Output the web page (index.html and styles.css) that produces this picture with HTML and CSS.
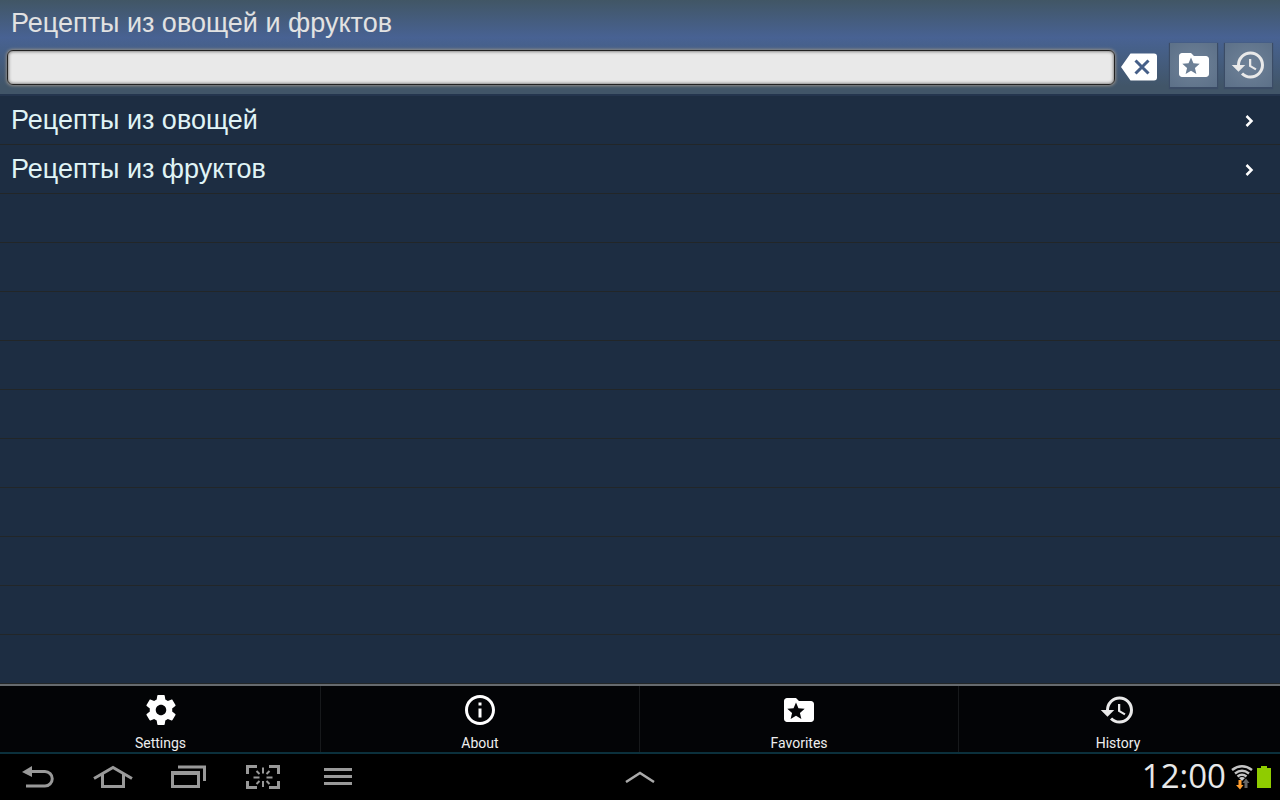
FILE: index.html
```html
<!DOCTYPE html>
<html lang="ru">
<head>
    <meta charset="UTF-8">
    <meta name="viewport" content="width=device-width, initial-scale=1.0">
    <title>Рецепты из овощей и фруктов</title>
    <link rel="stylesheet" href="styles.css">
</head>
<body>
    <!-- Shared icons -->
    <svg class="sprite" aria-hidden="true">
        <symbol id="icon-folder" viewBox="0 0 24 24">
            <path d="M20 6h-8l-2-2H4c-1.1 0-2 .9-2 2v12c0 1.1.9 2 2 2h16c1.1 0 2-.9 2-2V8c0-1.1-.9-2-2-2zm-6.42 12L10 15.9 6.42 18l.95-4.07-3.16-2.74 4.16-.36L10 7l1.63 3.84 4.16.36-3.16 2.74.95 4.06z"/>
        </symbol>
        <symbol id="icon-history" viewBox="0 0 24 24">
            <path d="M13 3a9 9 0 0 0-9 9H.5L5 16.500 9.500 12H6c0-3.87 3.13-7 7-7s7 3.13 7 7-3.13 7-7 7c-1.93 0-3.68-.79-4.94-2.06l-1.42 1.42A8.95 8.95 0 0 0 13 21a9 9 0 0 0 0-18zm-1 5v5l4.28 2.54.72-1.21-3.5-2.08V8H12z"/>
        </symbol>
        <symbol id="icon-chevron" viewBox="0 0 12 14">
            <path d="M3.500 2l5 5-5 5" fill="none" stroke="currentColor" stroke-width="2.500"/>
        </symbol>
    </svg>

    <header class="header">
        <h1 class="title">Рецепты из овощей и фруктов</h1>
        <form class="search">
            <input class="search-input" type="text" aria-label="Поиск">
            <button class="clear-btn" type="reset" aria-label="Очистить">
                <svg width="36" height="28" viewBox="0 0 36 28">
                    <path d="M9.500 0.500H33a3 3 0 0 1 3 3v21a3 3 0 0 1-3 3H9.500L0 14z" fill="#fff"/>
                    <path d="M14.500 7.500l13 13M27.500 7.500l-13 13" stroke="#455f88" stroke-width="3"/>
                </svg>
            </button>
            <button class="tool-btn" type="button" aria-label="Favorites">
                <svg class="icon"><use href="#icon-folder"/></svg>
            </button>
            <button class="tool-btn tool-btn-soft" type="button" aria-label="History">
                <svg class="icon"><use href="#icon-history"/></svg>
            </button>
        </form>
    </header>

    <main class="content">
        <ul class="list">
            <li>
                <a class="row" href="#vegetables">Рецепты из овощей
                    <svg class="chevron"><use href="#icon-chevron"/></svg>
                </a>
            </li>
            <li>
                <a class="row" href="#fruits">Рецепты из фруктов
                    <svg class="chevron"><use href="#icon-chevron"/></svg>
                </a>
            </li>
        </ul>
    </main>

    <nav class="menu">
        <button class="menu-item" type="button">
            <svg class="icon" viewBox="0 0 24 24">
                <path d="M19.430 12.980c.04-.32.07-.64.07-.98s-.03-.66-.07-.98l2.110-1.650c.19-.15.24-.42.12-.64l-2-3.460c-.12-.22-.39-.3-.61-.22l-2.490 1c-.52-.4-1.080-.73-1.690-.98l-.38-2.650A.488.488 0 0 0 14 2h-4c-.25 0-.46.18-.49.42l-.38 2.650c-.61.25-1.170.59-1.690.98l-2.490-1c-.23-.09-.49 0-.61.22l-2 3.460c-.13.22-.07.49.12.64l2.110 1.650c-.04.32-.07.65-.07.98s.03.66.07.98l-2.110 1.650c-.19.15-.24.42-.12.64l2 3.460c.12.22.39.3.61.22l2.490-1c.52.4 1.080.73 1.690.98l.38 2.650c.03.24.24.42.49.42h4c.25 0 .46-.18.49-.42l.38-2.650c.61-.25 1.170-.59 1.690-.98l2.490 1c.23.09.49 0 .61-.22l2-3.460c.12-.22.07-.49-.12-.64l-2.110-1.650zM12 15.500c-1.930 0-3.500-1.570-3.500-3.500s1.570-3.500 3.500-3.500 3.500 1.570 3.500 3.500-1.570 3.500-3.500 3.500z"/>
            </svg>
            <span>Settings</span>
        </button>
        <button class="menu-item" type="button">
            <svg class="icon" viewBox="0 0 24 24">
                <path d="M11 17h2v-6h-2v6zm1-15C6.480 2 2 6.480 2 12s4.480 10 10 10 10-4.480 10-10S17.520 2 12 2zm0 18c-4.410 0-8-3.590-8-8s3.590-8 8-8 8 3.590 8 8-3.590 8-8 8zM11 9h2V7h-2v2z"/>
            </svg>
            <span>About</span>
        </button>
        <button class="menu-item" type="button">
            <svg class="icon"><use href="#icon-folder"/></svg>
            <span>Favorites</span>
        </button>
        <button class="menu-item menu-item-soft" type="button">
            <svg class="icon"><use href="#icon-history"/></svg>
            <span>History</span>
        </button>
    </nav>

    <footer class="system-bar">
        <div class="system-keys">
            <button class="key" type="button" aria-label="Back">
                <svg width="32" height="22" viewBox="0 0 32 22">
                    <path d="M0 6L10 0v11z" fill="#999"/>
                    <path d="M9 5.500h14a7 7 0 0 1 0 14.500H4" fill="none" stroke="#999" stroke-width="3"/>
                </svg>
            </button>
            <button class="key" type="button" aria-label="Home">
                <svg width="40" height="24" viewBox="0 0 40 24" fill="none" stroke="#999" stroke-width="3">
                    <path d="M1 13.500L20 2.500l19 11"/>
                    <path d="M9.500 9v12.500h21V9"/>
                </svg>
            </button>
            <button class="key" type="button" aria-label="Recent apps">
                <svg width="36" height="24" viewBox="0 0 36 24" fill="none" stroke="#999" stroke-width="3">
                    <path d="M8 2h26.500v14"/>
                    <path d="M2.500 8v13.500h26V8"/>
                    <path d="M1 8h29" stroke-width="4"/>
                </svg>
            </button>
            <button class="key" type="button" aria-label="Screenshot">
                <svg width="34" height="24" viewBox="0 0 34 24" fill="none" stroke="#999">
                    <path d="M1.500 9V1.500H11M23 1.500h9.500V9M32.500 16v6.500H23M11 22.500H1.500V16" stroke-width="3"/>
                    <path d="M17 2.500v6M17 16v6M7.500 12.500h6M20.500 12.500h6M10.500 6l3 3M23.500 6l-3 3M10.500 19l3-3M23.500 19l-3-3" stroke-width="2"/>
                </svg>
            </button>
            <button class="key" type="button" aria-label="Menu">
                <svg width="28" height="18" viewBox="0 0 28 18" fill="#999">
                    <path d="M0 0h28v3H0zM0 7h28v3H0zM0 14h28v3H0z"/>
                </svg>
            </button>
        </div>
        <button class="key" type="button" aria-label="Expand">
            <svg width="30" height="12" viewBox="0 0 30 12">
                <path d="M1 11L15 2l14 9" fill="none" stroke="#aaa" stroke-width="2.500"/>
            </svg>
        </button>
        <div class="status">
            <time class="clock">12:00</time>
            <svg width="22" height="26" viewBox="0 0 22 26" role="img" aria-label="Wi-Fi">
                <g fill="none" stroke="#c4c4c4" stroke-width="2.500">
                    <path d="M1 6q10-7.500 20 0"/>
                    <path d="M4 9.500q7-5.500 14 0"/>
                    <path d="M6.500 12.500q4.500-3.500 9 0"/>
                </g>
                <path d="M8 14q3-2 6 0l-3 3z" fill="#ccc"/>
                <path d="M7.500 16h3v5h2L9 25.500 5 21h2.500z" fill="#ff9d2e"/>
                <path d="M13.500 24h3v-5h2L15 14.500 11.500 19h2z" fill="#666"/>
            </svg>
            <svg width="14" height="22" viewBox="0 0 14 22" role="img" aria-label="Battery">
                <path d="M0 2h4V0h6v2h4v20H0z" fill="#8fcc00"/>
            </svg>
        </div>
    </footer>
</body>
</html>
```
FILE: styles.css
```css
* {
    margin: 0;
    padding: 0;
    box-sizing: border-box;
}

body {
    display: flex;
    flex-direction: column;
    min-height: 100vh;
    background-color: #000;
    font-family: "Liberation Sans", Arial, sans-serif;
}

button {
    border: none;
    background: none;
    color: inherit;
    font: inherit;
    cursor: pointer;
}

svg {
    display: block;
}

.sprite {
    display: none;
}

.icon {
    width: 36px;
    height: 36px;
    fill: currentColor;
}

/* Header */
.header {
    padding: 7px 8px 7px 7px;
    background: linear-gradient(#415665 0%, #486293 40%, #466089 52%, #415568 92%);
    border-bottom: 2px solid #24354e;
}

.title {
    padding-left: 4px;
    color: #e2e2e2;
    font-size: 27px;
    font-weight: normal;
    line-height: 32px;
    height: 36px;
}

.search {
    display: flex;
    align-items: center;
}

.search-input {
    flex: 1;
    min-width: 0;
    height: 35px;
    margin-top: 5px;
    padding: 0 8px;
    border: 1px solid #222;
    border-radius: 6px;
    background-color: #e9e9e9;
    box-shadow: 0 0 3px 1px #8d8a86, inset 0 0 3px 1px #888;
    color: #222;
    font: inherit;
    font-size: 22px;
    outline: none;
}

.clear-btn {
    margin: 4px 13px 0 6px;
}

.tool-btn {
    display: flex;
    align-items: center;
    justify-content: center;
    width: 47px;
    height: 44px;
    background: radial-gradient(#6f8298, #5c7088);
    box-shadow: 0 1px 1px 1px #3b4c66;
    color: #fff;
}

.tool-btn + .tool-btn {
    margin-left: 8px;
}

.tool-btn-soft,
.menu-item-soft .icon {
    color: #e9e9e9;
}

/* List, the ruled background goes on below the last row */
.content {
    flex: 1;
    background: repeating-linear-gradient(#1d2d42 0 48px, #222628 48px 49px);
}

.list {
    list-style: none;
}

.row {
    display: flex;
    align-items: center;
    justify-content: space-between;
    height: 49px;
    padding: 0 25px 0 11px;
    color: #e0f4f6;
    font-size: 27px;
    text-decoration: none;
}

.chevron {
    width: 12px;
    height: 14px;
    color: #fff;
}

/* Bottom menu */
.menu {
    display: grid;
    grid-template-columns: repeat(4, 1fr);
    padding: 0 3px 0 1px;
    border-top: 2px solid #666a6e;
    border-bottom: 2px solid #0b303c;
    background-color: #030406;
}

.menu-item {
    display: flex;
    flex-direction: column;
    align-items: center;
    gap: 6px;
    height: 66px;
    padding-top: 6px;
    color: #fff;
    font-family: Roboto, sans-serif;
    font-size: 14px;
    line-height: 18px;
}

.menu-item span {
    color: #eee;
}

.menu-item + .menu-item {
    border-left: 1px solid #17191b;
}

/* System bar */
.system-bar {
    display: grid;
    grid-template-columns: 1fr auto 1fr;
    align-items: center;
    height: 46px;
    background-color: #000;
}

.system-keys {
    display: flex;
}

.key {
    display: flex;
    align-items: center;
    justify-content: center;
    width: 75px;
    height: 46px;
}

.status {
    display: flex;
    align-items: center;
    justify-content: flex-end;
    padding-right: 9px;
}

.status svg {
    margin-left: 4px;
}

.clock {
    padding-right: 1px;
    color: #e8e8e8;
    font-family: "Open Sans", sans-serif;
    font-size: 33px;
    line-height: 44px;
    height: 46px;
}
```
